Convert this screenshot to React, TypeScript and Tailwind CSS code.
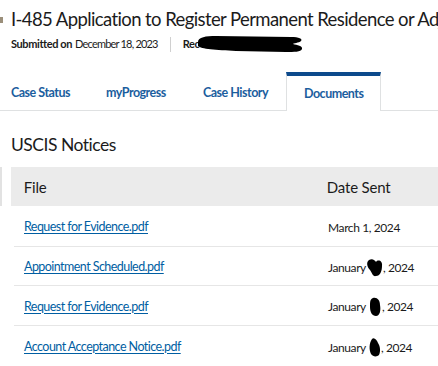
const font = { fontFamily: "Lato, 'Noto Sans', sans-serif" };

function Blob({ kind }: { kind: number }) {
  if (kind === 1) {
    return (
      <svg width="17" height="19" viewBox="0 0 17 19" className="inline-block align-[-5px]">
        <path d="M3,2 C6,0 9,2 10,4 C12,1 17,3 16,8 C16,13 14,18 10,18 C7,19 6,15 4,12 C1,9 0,4 3,2 Z" fill="#000" />
      </svg>
    );
  }
  if (kind === 2) {
    return (
      <svg width="13" height="20" viewBox="0 0 13 20" className="ml-[3px] inline-block align-[-6px]">
        <path d="M4,1 C8,0 11,3 11,8 C12,13 11,19 7,19 C3,19 1,15 1,10 C1,5 1,2 4,1 Z" fill="#000" />
      </svg>
    );
  }
  return (
    <svg width="12" height="20" viewBox="0 0 12 20" className="ml-[3px] inline-block align-[-5px]">
      <path d="M3,2 C5,0 8,3 9,6 C11,9 12,14 10,18 C8,20 4,20 2,17 C0,13 0,6 3,2 Z" fill="#000" />
    </svg>
  );
}

const rows = [
  { file: "Request for Evidence.pdf", pre: "March 1, 2024", blob: 0, h: "h-[40px]" },
  { file: "Appointment Scheduled.pdf", pre: "January", blob: 1, h: "h-[39px] border-t" },
  { file: "Request for Evidence.pdf", pre: "January", blob: 2, h: "h-[40px] border-t" },
  { file: "Account Acceptance Notice.pdf", pre: "January", blob: 3, h: "h-[40px] border-t" },
];

const tabs = [
  { label: "Case Status", w: "w-[95px]" },
  { label: "myProgress", w: "w-[97px]" },
  { label: "Case History", w: "w-[101px]" },
];

export default function App() {
  return (
    <div className="h-[366px] w-[438px] overflow-hidden bg-white text-[#1b1b1b]" style={font}>
      {/* title */}
      <div className="flex items-center overflow-hidden pt-[7px]">
        <span className="mt-[1px] h-[6px] w-[3px] shrink-0 bg-[#9b8f7a]" />
        <h1 className="ml-[8px] whitespace-nowrap text-[18.5px] leading-[24px] tracking-[-0.6px]">
          I-485 Application to Register Permanent Residence or Adjust Status
        </h1>
      </div>
      <div className="mt-[3px] flex items-center pl-[11px] text-[11px] leading-[16px] tracking-[-0.4px]">
        <span className="font-bold">Submitted on</span>
        <span className="ml-[3px] tracking-[-0.8px]">December 18, 2023</span>
        <span className="ml-[12px] h-[15px] w-px bg-[#d0d0d0]" />
        <span className="ml-[12px] font-bold">Rec</span>
        <svg width="108" height="20" viewBox="0 0 108 20" className="-ml-[3px]">
          <path
            d="M2,8 C2,3 10,2 20,2 L95,3 C103,3 107,5 105,7 C103,9 97,9 97,10 C101,11 107,12 106,15 C105,18 98,18 90,18 L40,17 C20,16 5,15 2,12 Z"
            fill="#000"
          />
        </svg>
      </div>

      {/* tabs */}
      <div className="-ml-[7px] mt-[18px] flex h-[39px] text-[12.5px] font-bold tracking-[-0.5px] text-[#1b5e9e]">
        {tabs.map((t) => (
          <div key={t.label} className={`${t.w} flex items-center border-b border-t-4 border-b-[#dfe1e2] border-t-transparent pl-[18px] pt-[1px]`}>
            {t.label}
          </div>
        ))}
        <div className="flex w-[95px] items-center border-x border-t-4 border-x-[#dfe1e2] border-t-[#0d4a8c] pl-[17px] pt-[1px]">
          Documents
        </div>
        <div className="flex-1 border-b border-b-[#dfe1e2]" />
      </div>

      <h2 className="mt-[23px] pl-[11px] text-[17.5px] leading-[22px] tracking-[-0.5px]">USCIS Notices</h2>

      {/* table */}
      <div className="mt-[11px] flex">
        <span className="h-[39px] w-[2px] bg-[#e2e2e2]" />
        <div className="ml-[9px] grid h-[39px] w-[460px] grid-cols-[303px_1fr] items-center bg-[#ebebeb] pt-[1px] text-[15px] tracking-[-0.2px]">
          <div className="pl-[13px]">File</div>
          <div className="pl-[13px]">Date Sent</div>
        </div>
      </div>
      <div className="ml-[14px] w-[460px] text-[12.5px]">
        {rows.map((r, i) => (
          <div key={i} className={`${r.h} grid grid-cols-[301px_1fr] items-center border-[#e6e6e6] pt-[3px]`}>
            <div className="pl-[10px] tracking-[-0.55px]">
              <a href="#" className="text-[#005ea2] underline underline-offset-2">
                {r.file}
              </a>
            </div>
            <div className="whitespace-nowrap pl-[13px] text-[12px] tracking-[-0.4px]">
              {r.pre}
              {r.blob > 0 && <Blob kind={r.blob} />}
              {r.blob > 0 && ", 2024"}
            </div>
          </div>
        ))}
      </div>
    </div>
  );
}
